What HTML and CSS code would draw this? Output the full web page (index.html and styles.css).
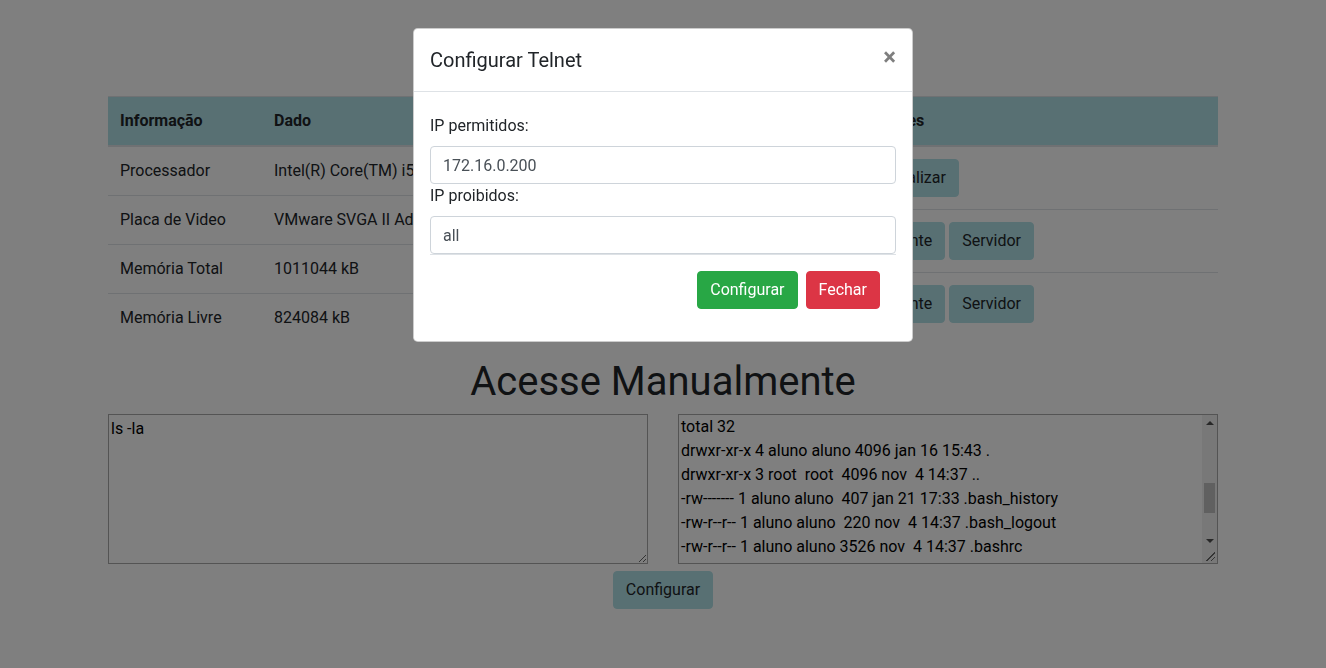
FILE: index.html
```html
<!DOCTYPE html>
<html lang="pt-BR">
<head>
<meta charset="utf-8">
<title>Telnet</title>
<link rel="stylesheet" href="styles.css">
</head>
<body>
<main class="container">
  <section class="tables">
    <table class="table">
      <thead>
        <tr><th class="col-info">Informação</th><th>Dado</th></tr>
      </thead>
      <tbody>
        <tr><td>Processador</td><td>Intel(R) Core(TM) i5-7200U CPU @ 2.50GHz</td></tr>
        <tr><td>Placa de Video</td><td>VMware SVGA II Adapter</td></tr>
        <tr><td>Memória Total</td><td>1011044 kB</td></tr>
        <tr><td>Memória Livre</td><td>824084 kB</td></tr>
      </tbody>
    </table>
    <table class="table">
      <thead>
        <tr><th>Opções</th></tr>
      </thead>
      <tbody>
        <tr><td><div class="btn-row"><button class="btn btn-blue">Atualizar</button></div></td></tr>
        <tr><td><div class="btn-row"><button class="btn btn-blue">Cliente</button><button class="btn btn-blue">Servidor</button></div></td></tr>
        <tr><td><div class="btn-row"><button class="btn btn-blue">Cliente</button><button class="btn btn-blue">Servidor</button></div></td></tr>
      </tbody>
    </table>
  </section>

  <h1 class="title">Acesse Manualmente</h1>

  <section class="consoles">
    <textarea class="console">ls -la</textarea>
    <div class="out-wrap">
      <textarea class="console console-out" id="saida">$ whoami
aluno
$ pwd
/home/aluno
$ ls
Documentos
Downloads
Imagens
Música
Vídeos
$ ls -la
total 32
drwxr-xr-x 4 aluno aluno 4096 jan 16 15:43 .
drwxr-xr-x 3 root  root  4096 nov  4 14:37 ..
-rw------- 1 aluno aluno  407 jan 21 17:33 .bash_history
-rw-r--r-- 1 aluno aluno  220 nov  4 14:37 .bash_logout
-rw-r--r-- 1 aluno aluno 3526 nov  4 14:37 .bashrc
drwx------ 2 aluno aluno 4096 jan 16 15:43 .cache
drwxrwxr-x 3 aluno aluno 4096 jan 16 15:43 .local
-rw-r--r-- 1 aluno aluno  807 nov  4 14:37 .profile</textarea>
      <div class="scrollbar" aria-hidden="true">
        <div class="sb-btn"><span class="arrow-up"></span></div>
        <div class="sb-track"><div class="sb-thumb"></div></div>
        <div class="sb-btn"><span class="arrow-down"></span></div>
      </div>
    </div>
  </section>

  <div class="actions">
    <button class="btn btn-blue">Configurar</button>
  </div>
</main>

<div class="backdrop"></div>

<div class="modal">
  <div class="modal-dialog">
    <div class="modal-content">
      <div class="modal-header">
        <h5 class="modal-title">Configurar Telnet</h5>
        <button class="close" type="button">×</button>
      </div>
      <div class="modal-body">
        <form class="form">
          <label class="label" for="permitidos">IP permitidos:</label>
          <input class="form-control" id="permitidos" type="text" value="172.16.0.200">
          <label class="label" for="proibidos">IP proibidos:</label>
          <input class="form-control" id="proibidos" type="text" value="all">
          <div class="modal-footer">
            <button class="btn btn-success" type="button">Configurar</button>
            <button class="btn btn-danger" type="button">Fechar</button>
          </div>
        </form>
      </div>
    </div>
  </div>
</div>
<script src="script.js"></script>
</body>
</html>
```

FILE: styles.css
```css
*, *::before, *::after { box-sizing: border-box; }

html, body { margin: 0; }

body {
  font-family: Roboto, "Liberation Sans", Arial, sans-serif;
  font-size: 16px;
  line-height: 1.5;
  color: #212529;
  background: #fff;
}

button, input, textarea {
  font-family: inherit;
  font-size: inherit;
  line-height: inherit;
  margin: 0;
}

.container {
  width: 1110px;
  margin: 0 auto;
  padding-top: 96px;
}

.tables {
  display: grid;
  grid-template-columns: 750px 360px;
  align-items: start;
}

.table {
  width: 100%;
  border-collapse: collapse;
  margin-bottom: 16px;
  color: #212529;
}

.table th,
.table td {
  padding: 12px;
  vertical-align: top;
  border-top: 1px solid #dee2e6;
  text-align: left;
}

.table thead th {
  vertical-align: bottom;
  border-bottom: 2px solid #dee2e6;
  background: #b0e0e6;
  font-weight: 700;
}

.col-info { width: 154px; }

.table td { white-space: nowrap; }

.btn-row {
  display: flex;
  gap: 4px;
}

.btn {
  display: inline-block;
  font-weight: 400;
  color: #212529;
  text-align: center;
  vertical-align: middle;
  border: 1px solid transparent;
  padding: 6px 12px;
  border-radius: 4px;
  background: transparent;
  cursor: pointer;
}

.btn-blue { background: #b0e0e6; border-color: #b0e0e6; color: #212529; }
.btn-success { background: #28a745; border-color: #28a745; color: #fff; }
.btn-danger { background: #dc3545; border-color: #dc3545; color: #fff; }

.title {
  margin: 0 0 8px;
  font-size: 40px;
  font-weight: 400;
  line-height: 1.2;
  text-align: center;
}

.consoles {
  display: grid;
  grid-template-columns: 540px 540px;
  column-gap: 30px;
}

.console {
  display: block;
  width: 540px;
  height: 150px;
  padding: 2px;
  border: 1px solid #a9a9a9;
  background: #fff;
  color: #000;
  overflow: auto;
  resize: vertical;
}

.console-out::-webkit-resizer {
  background-color: #f1f1f1;
  background-image: linear-gradient(135deg, transparent 0 50%, #6b6b6b 50% 58%, transparent 58% 75%, #6b6b6b 75% 83%, transparent 83%);
  background-size: 9px 9px;
  background-repeat: no-repeat;
  background-position: right 2px bottom 2px;
}

.out-wrap {
  position: relative;
  width: 540px;
  height: 150px;
}

.scrollbar {
  position: absolute;
  top: 1px;
  right: 1px;
  width: 15px;
  height: 133px;
  display: flex;
  flex-direction: column;
  background: #f1f1f1;
}

.sb-btn {
  height: 15px;
  display: flex;
  align-items: center;
  justify-content: center;
}

.arrow-up {
  width: 0;
  height: 0;
  border-left: 4px solid transparent;
  border-right: 4px solid transparent;
  border-bottom: 4px solid #505050;
}

.arrow-down {
  width: 0;
  height: 0;
  border-left: 4px solid transparent;
  border-right: 4px solid transparent;
  border-top: 4px solid #505050;
}

.sb-track {
  flex: 1;
  padding: 53px 2px 0;
}

.sb-thumb {
  height: 30px;
  background: #c1c1c1;
}

.actions {
  display: flex;
  justify-content: center;
  margin-top: 7px;
}

.backdrop {
  position: fixed;
  inset: 0;
  background: #000;
  opacity: 0.5;
}

.modal {
  position: fixed;
  inset: 0;
}

.modal-dialog {
  max-width: 500px;
  margin: 28px auto;
}

.modal-content {
  display: flex;
  flex-direction: column;
  background: #fff;
  border: 1px solid rgba(0, 0, 0, 0.2);
  border-radius: 4.8px;
}

.modal-header {
  display: flex;
  align-items: flex-start;
  justify-content: space-between;
  padding: 16px;
  border-bottom: 1px solid #dee2e6;
}

.modal-title {
  margin: 0;
  font-size: 20px;
  font-weight: 400;
  line-height: 1.5;
}

.close {
  padding: 16px;
  margin: -16px -16px -16px auto;
  background: transparent;
  border: 0;
  font-size: 24px;
  font-weight: 700;
  line-height: 1;
  color: #000;
  opacity: 0.5;
  text-shadow: 0 1px 0 #fff;
}

.modal-body {
  padding: 16px;
}

.form { margin-top: 6px; }

.label {
  display: inline-block;
  margin-bottom: 8px;
}

.form-control {
  display: block;
  width: 100%;
  height: 38px;
  padding: 6px 12px;
  color: #495057;
  background: #fff;
  border: 1px solid #ced4da;
  border-radius: 4px;
}

.modal-footer {
  display: flex;
  align-items: center;
  justify-content: flex-end;
  padding: 12px;
  border-top: 1px solid #dee2e6;
}

.modal-footer > .btn { margin: 4px; }
```

FILE: script.js
```js
document.getElementById('saida').scrollTop = 266;
```
